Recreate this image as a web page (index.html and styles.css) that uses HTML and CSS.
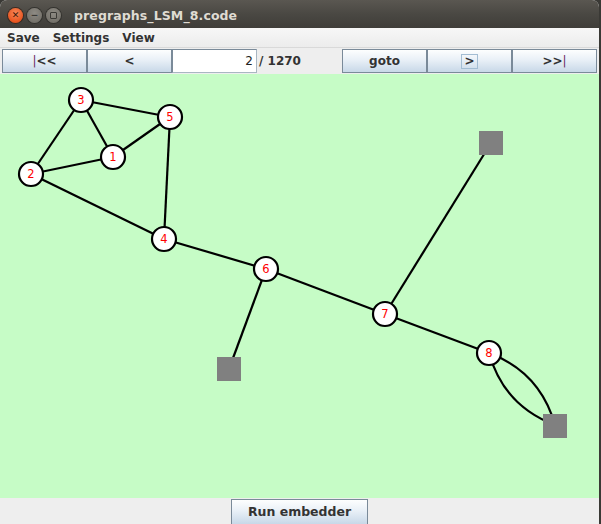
FILE: index.html
```html
<!DOCTYPE html>
<html>
<head>
<meta charset="utf-8">
<link rel="stylesheet" href="styles.css">
</head>
<body>
<div class="window">
  <div class="titlebar">
    <span class="tbtn close">&#x2715;</span>
    <span class="tbtn min">&#x2212;</span>
    <span class="tbtn max"><i class="maxbox"></i></span>
    <span class="title">pregraphs_LSM_8.code</span>
  </div>
  <div class="menubar">
    <span class="menu">Save</span>
    <span class="menu">Settings</span>
    <span class="menu">View</span>
  </div>
  <div class="toolbar">
    <button class="btn"><span class="bar">|</span>&lt;&lt;</button>
    <button class="btn">&lt;</button>
    <div class="field">2</div>
    <div class="count">/ 1270</div>
    <button class="btn">goto</button>
    <button class="btn"><span class="focus">&gt;</span></button>
    <button class="btn">&gt;&gt;<span class="bar">|</span></button>
  </div>
  <div class="canvas">
    <svg class="graph" width="599" height="424" viewBox="0 74 599 424">
      <g class="edges">
        <line x1="81" y1="100" x2="170" y2="117"/>
        <line x1="81" y1="100" x2="113" y2="157"/>
        <line x1="81" y1="100" x2="31" y2="174"/>
        <line x1="31" y1="174" x2="113" y2="157"/>
        <line x1="113" y1="157" x2="170" y2="117"/>
        <line x1="170" y1="117" x2="164" y2="239"/>
        <line x1="31" y1="174" x2="164" y2="239"/>
        <line x1="164" y1="239" x2="266" y2="269"/>
        <line x1="266" y1="269" x2="385" y2="314"/>
        <line x1="266" y1="269" x2="229" y2="369"/>
        <line x1="385" y1="314" x2="491" y2="143"/>
        <line x1="385" y1="314" x2="489" y2="353"/>
        <path d="M489 353 Q540 372 555 425"/>
        <path d="M489 353 Q504 406 555 425"/>
      </g>
      <g class="squares">
        <rect x="479" y="131" width="24" height="24"/>
        <rect x="217" y="357" width="24" height="24"/>
        <rect x="543" y="414" width="24" height="24"/>
      </g>
      <g class="nodes">
        <circle cx="81" cy="100" r="12"/>
        <circle cx="170" cy="117" r="12"/>
        <circle cx="113" cy="157" r="12"/>
        <circle cx="31" cy="174" r="12"/>
        <circle cx="164" cy="239" r="12"/>
        <circle cx="266" cy="269" r="12"/>
        <circle cx="385" cy="314" r="12"/>
        <circle cx="489" cy="353" r="12"/>
      </g>
      <g class="labels">
        <text x="81" y="104">3</text>
        <text x="170" y="121">5</text>
        <text x="113" y="161">1</text>
        <text x="31" y="178">2</text>
        <text x="164" y="243">4</text>
        <text x="266" y="273">6</text>
        <text x="385" y="318">7</text>
        <text x="489" y="357">8</text>
      </g>
    </svg>
  </div>
  <div class="footer">
    <button class="btn run">Run embedder</button>
  </div>
</div>
</body>
</html>
```
FILE: styles.css
```css
* { box-sizing: border-box; }
html, body { margin: 0; padding: 0; }
body {
  background: #3a3935;
  width: 601px;
  height: 524px;
  overflow: hidden;
  font-family: "DejaVu Sans", "Liberation Sans", sans-serif;
}
.window {
  width: 599px;
  height: 524px;
  display: flex;
  flex-direction: column;
  background: #eeeeee;
  border-radius: 7px 7px 0 0;
  overflow: hidden;
}
.titlebar {
  height: 28px;
  flex: none;
  display: flex;
  align-items: center;
  padding-left: 8px;
  padding-top: 3px;
  background: linear-gradient(#5a5751, #4a4843 50%, #3f3d39);
}
.tbtn {
  width: 15px;
  height: 15px;
  border-radius: 50%;
  display: flex;
  align-items: center;
  justify-content: center;
  font-size: 9px;
  font-weight: bold;
  line-height: 1;
  margin-right: 4px;
}
.close {
  background: radial-gradient(circle at 50% 35%, #f7895a, #e9541f 70%, #c5431a);
  color: #3b1608;
  box-shadow: 0 0 0 1px #3a2a22;
}
.min, .max {
  background: radial-gradient(circle at 50% 35%, #8e8b84, #75726b 70%, #66635d);
  color: #3a3935;
  box-shadow: 0 0 0 1px #33322e;
}
.maxbox {
  display: block;
  width: 7px;
  height: 7px;
  border: 1.5px solid #3a3935;
  border-radius: 1px;
}
.title {
  margin-left: 9px;
  color: #dfdbd2;
  font-weight: bold;
  font-size: 12.5px;
  letter-spacing: 0.1px;
}
.menubar {
  height: 20px;
  flex: none;
  display: flex;
  align-items: center;
  gap: 13px;
  padding-left: 7px;
  background: linear-gradient(#f7f7f7, #ececec);
  border-bottom: 1px solid #d9d9d9;
}
.menu {
  font-size: 12px;
  font-weight: bold;
  color: #333333;
}
.toolbar {
  height: 26px;
  flex: none;
  display: grid;
  grid-template-columns: repeat(7, 85px);
  padding: 1px 2px;
  background: #eeeeee;
}
.btn {
  height: 24px;
  margin: 0;
  padding: 0;
  border: 1px solid #7a8a99;
  background: linear-gradient(#fdfefe, #e9f0f7 45%, #c8d8e8);
  font-family: "DejaVu Sans", "Liberation Sans", sans-serif;
  font-weight: bold;
  font-size: 12px;
  color: #333333;
  display: flex;
  align-items: center;
  justify-content: center;
}
.bar { color: #6b2a63; font-weight: normal; }
.focus {
  border: 1px solid #a3bdd3;
  padding: 0 2px;
  line-height: 13px;
}
.field {
  height: 24px;
  background: #ffffff;
  border: 1px solid #7a8a99;
  border-bottom-color: #a9b6c2;
  border-right-color: #a9b6c2;
  text-align: right;
  padding-right: 3px;
  font-size: 12px;
  line-height: 22px;
  color: #222222;
}
.count {
  padding-left: 2px;
  font-size: 12px;
  font-weight: bold;
  line-height: 24px;
  color: #333333;
}
.canvas {
  height: 424px;
  flex: none;
  background: #c6fcc6;
}
.graph { display: block; }
.edges line, .edges path {
  stroke: #000000;
  stroke-width: 2.2;
  fill: none;
}
.squares rect { fill: #808080; }
.nodes circle {
  fill: #ffffff;
  stroke: #000000;
  stroke-width: 2.2;
}
.labels text {
  fill: #ff0000;
  font-family: "DejaVu Sans", sans-serif;
  font-size: 11.5px;
  text-anchor: middle;
}
.footer {
  flex: 1;
  display: flex;
  justify-content: center;
  padding-top: 1px;
  background: #eeeeee;
}
.run {
  width: 137px;
  height: 26px;
  flex: none;
  font-size: 12.5px;
  padding-bottom: 2px;
}
```
